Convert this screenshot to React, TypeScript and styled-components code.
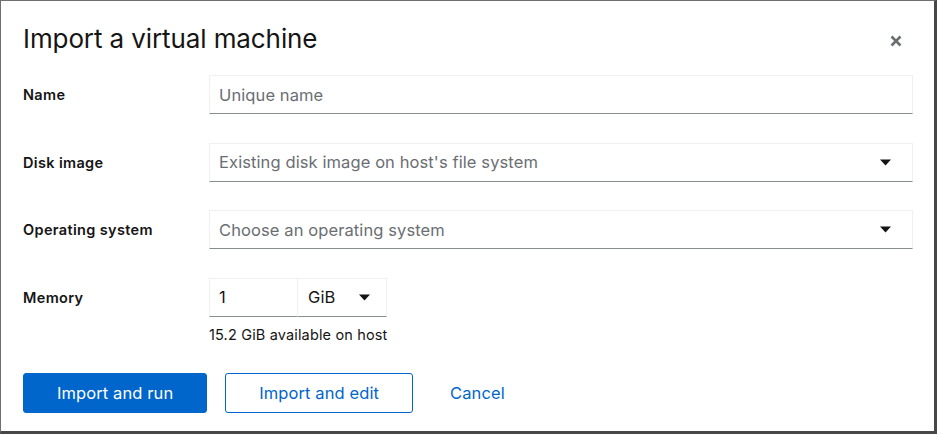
import * as React from "react";
import styled, { createGlobalStyle } from "styled-components";

const GlobalStyle = createGlobalStyle`
	html, body {
		margin: 0;
		padding: 0;
		background: #fff;
	}
	body {
		font-family: "Inter", "Liberation Sans", sans-serif;
		color: #151515;
	}
`;

const Frame = styled.div`
	box-sizing: border-box;
	width: 937px;
	height: 434px;
	border-style: solid;
	border-color: #6f6f6f #474747 #474747 #6f6f6f;
	border-width: 1px 3px 3px 1px;
	padding: 0 21px 0 22px;
	display: flex;
	flex-direction: column;
	background: #fff;
`;

const Header = styled.header`
	display: flex;
	align-items: center;
	justify-content: space-between;
	height: 76px;
	margin-top: -1px;
	margin-bottom: -1px;
`;

const Title = styled.h1`
	margin: 0;
	font-size: 26px;
	font-weight: 400;
	letter-spacing: -0.1px;
`;

const CloseButton = styled.button`
	border: 0;
	background: none;
	padding: 0;
	width: 30px;
	height: 30px;
	margin-right: 2px;
	margin-top: 6px;
	display: flex;
	align-items: center;
	justify-content: center;
	color: #6a6e73;
	cursor: pointer;
`;

const Form = styled.div`
	display: grid;
	grid-template-columns: 186px 1fr;
	row-gap: 28.67px;
	align-items: start;
`;

const Label = styled.label`
	font-size: 14.5px;
	font-weight: 600;
	letter-spacing: 0.35px;
	line-height: 39px;
`;

const Field = styled.div`
	display: flex;
	flex-direction: column;
`;

const Control = styled.div<{ $width?: number }>`
	box-sizing: border-box;
	height: 39px;
	width: ${(p) => (p.$width ? `${p.$width}px` : "100%")};
	display: flex;
	align-items: center;
	padding: 0 21px 0 9px;
	border: 1px solid #f0f0f0;
	border-bottom-color: #8a8d90;
	font-size: 16.5px;
	letter-spacing: 0.1px;
	color: ${(p) => (p.$width ? "#151515" : "#6a6e73")};
	justify-content: space-between;
`;

const Group = styled.div`
	display: flex;
`;

const Caret = () => (
	<svg width="11" height="7" viewBox="0 0 11 7">
		<path d="M0 0.5h11L5.5 6.5z" fill="#151515" />
	</svg>
);

const UnitSelect = styled(Control)`
	border-left: 0;
	padding: 0 16px 0 10px;
`;

const NumberBox = styled(Control)`
	padding-right: 0;
`;

const Helper = styled.div`
	font-size: 14.5px;
	letter-spacing: 0.15px;
	margin-top: 9px;
`;

const Footer = styled.div`
	display: flex;
	align-items: center;
	gap: 18px;
	margin-top: 30px;
`;

const Button = styled.button<{ $variant: "primary" | "secondary" | "link" }>`
	box-sizing: border-box;
	height: 40px;
	font-family: inherit;
	font-size: 16.5px;
	letter-spacing: 0.1px;
	border-radius: 3px;
	padding: 0 ${(p) => (p.$variant === "link" ? 18 : 33)}px;
	cursor: pointer;
	color: ${(p) => (p.$variant === "primary" ? "#fff" : "#0066cc")};
	background: ${(p) => (p.$variant === "primary" ? "#0066cc" : "transparent")};
	border: 1px solid ${(p) => (p.$variant === "link" ? "transparent" : "#0066cc")};
`;

export default function App() {
	return (
		<>
			<GlobalStyle />
			<Frame>
				<Header>
					<Title>Import a virtual machine</Title>
					<CloseButton aria-label="Close">
						<svg width="12" height="12" viewBox="0 0 12 12">
							<path d="M1.5 1.5l9 9M10.5 1.5l-9 9" stroke="currentColor" strokeWidth="2.6" />
						</svg>
					</CloseButton>
				</Header>
				<Form>
					<Label>Name</Label>
					<Control>Unique name</Control>

					<Label>Disk image</Label>
					<Control>
						Existing disk image on host's file system
						<Caret />
					</Control>

					<Label>Operating system</Label>
					<Control>
						Choose an operating system
						<Caret />
					</Control>

					<Label>Memory</Label>
					<Field>
						<Group>
							<NumberBox $width={89}>1</NumberBox>
							<UnitSelect $width={89}>
								GiB
								<Caret />
							</UnitSelect>
						</Group>
						<Helper>15.2 GiB available on host</Helper>
					</Field>
				</Form>
				<Footer>
					<Button $variant="primary">Import and run</Button>
					<Button $variant="secondary">Import and edit</Button>
					<Button $variant="link">Cancel</Button>
				</Footer>
			</Frame>
		</>
	);
}
